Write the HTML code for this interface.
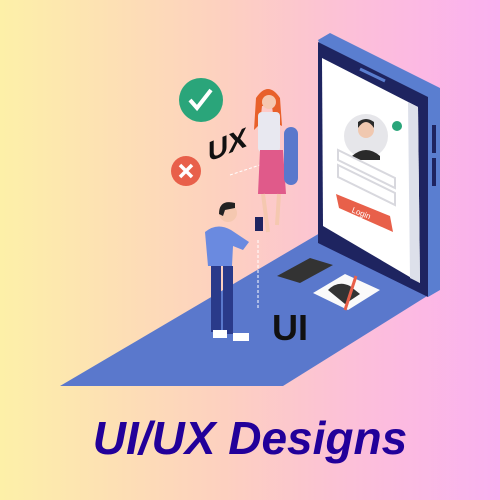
<!DOCTYPE html>
<html><head><style>
html,body{margin:0;padding:0;width:500px;height:500px;overflow:hidden}
body{background:linear-gradient(90deg,#fdf0a8 0%,#fdd0c0 45%,#fcc0d8 70%,#fbb0f0 100%);position:relative}
.t{position:absolute;left:0;width:500px;top:411px;text-align:center;font:italic bold 46px "Liberation Sans",sans-serif;color:#22009a;letter-spacing:0px}
</style></head><body>
<svg width="500" height="500" style="position:absolute;left:0;top:0">
<polygon points="60,386 283,386 440,288 320,233" fill="#5a78cc"/>
<polygon points="318,40 330,33 440,88 440,290 428,297" fill="#5a7ed0"/>
<polygon points="318,42 428,97 428,297 318,243" fill="#1e2460"/>
<polygon points="322,58 418,107 420,283 323,226" fill="#fff"/>
<polygon points="408,102 418,107 420,283 410,278" fill="#dde0ea"/>
<line x1="360" y1="69" x2="385" y2="81" stroke="#5a7ed0" stroke-width="3"/>
<rect x="432" y="125" width="4" height="28" fill="#1e2460"/>
<rect x="432" y="158" width="4" height="28" fill="#1e2460"/>
<circle cx="366" cy="136" r="22" fill="#e6e6ea"/>
<path d="M352,156 q14,-12 28,0 l0,4 h-28z" fill="#2a2a2a"/>
<circle cx="366" cy="130" r="8" fill="#f0c8b0"/>
<path d="M358,128 q8,-12 16,0 v-6 q-8,-6 -16,0z" fill="#2a2a2a"/>
<circle cx="397" cy="126" r="5" fill="#2aa57a"/>
<polygon points="338,150 395,178 395,188 338,160" fill="#fff" stroke="#d8d8de" stroke-width="2"/>
<polygon points="338,165 395,193 395,205 338,177" fill="#fff" stroke="#d8d8de" stroke-width="2"/>
<polygon points="336,194 390,216 393,232 339,208" fill="#e8604a"/>
<text x="352" y="216" font-family="Liberation Sans,sans-serif" font-size="8" fill="#fff" transform="rotate(22 362 212)">Login</text>
<polygon points="277,276 310,258 333,265 300,283" fill="#333"/>
<polygon points="313,293 345,274 380,290 348,310" fill="#fafafa"/>
<path d="M328,290 q10,-10 22,-4 l10,8 -15,10z" fill="#333"/>
<line x1="345" y1="310" x2="356" y2="276" stroke="#e8604a" stroke-width="3"/>
<ellipse cx="201" cy="100" rx="22" ry="22" fill="#2aa57a"/>
<path d="M190,100 l7,8 14,-18" stroke="#fff" stroke-width="4" fill="none"/>
<ellipse cx="186" cy="171" rx="15" ry="15" fill="#e8604a"/>
<path d="M180,165 l12,12 M192,165 l-12,12" stroke="#fff" stroke-width="3.5"/>
<text x="208" y="168" font-family="Liberation Sans,sans-serif" font-weight="bold" font-size="28" fill="#111" transform="translate(0,78) skewY(-22)">UX</text>
<text x="272" y="340" font-family="Liberation Sans,sans-serif" font-weight="bold" font-size="36" fill="#111" transform="scale(1,1)">UI</text>
<line x1="230" y1="175" x2="275" y2="160" stroke="#fff" stroke-dasharray="3 2"/>
<line x1="258" y1="240" x2="258" y2="310" stroke="#fff" stroke-dasharray="3 2"/>
<!-- woman -->
<path d="M256,98 q12,-18 24,0 l2,28 -8,-4 -2,-16 -10,0 -2,18 -6,6z" fill="#e8602a"/>
<circle cx="269" cy="102" r="7" fill="#f5c8b0"/>
<rect x="258" y="112" width="22" height="40" rx="4" fill="#e8e8f0"/>
<polygon points="260,150 283,150 286,194 258,194" fill="#e05a8a"/>
<line x1="263" y1="194" x2="268" y2="232" stroke="#f5c8b0" stroke-width="4"/>
<line x1="279" y1="194" x2="277" y2="225" stroke="#f5c8b0" stroke-width="4"/>
<rect x="284" y="127" width="14" height="58" rx="7" fill="#5a78cc"/>
<!-- man -->
<circle cx="228" cy="213" r="9" fill="#f5c8b0"/>
<path d="M219,214 q0,-15 16,-11 l0,5 -10,2 -2,6z" fill="#222"/>
<path d="M205,232 q12,-10 26,-2 l18,12 -6,8 -10,-4 -1,20 -24,0z" fill="#6a8ae0"/>
<rect x="211" y="266" width="10" height="66" fill="#2a3a8a"/>
<rect x="223" y="266" width="10" height="68" fill="#2a3a8a"/>
<rect x="213" y="330" width="14" height="8" fill="#fff"/>
<rect x="233" y="333" width="16" height="8" fill="#fff"/>
<rect x="255" y="217" width="8" height="14" fill="#1e2460"/>
</svg>
<div class="t">UI/UX Designs</div>
</body></html>
